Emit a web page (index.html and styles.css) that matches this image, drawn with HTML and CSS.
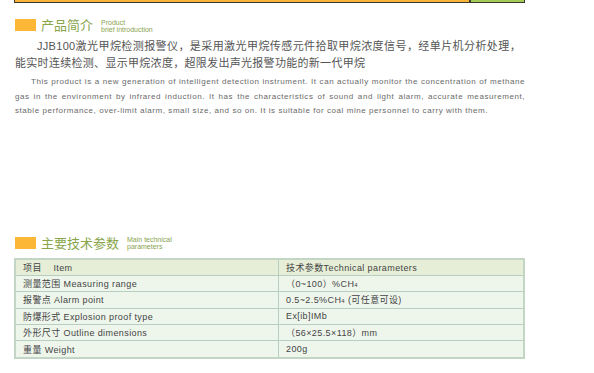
FILE: index.html
```html
<!DOCTYPE html>
<html lang="zh">
<head>
<meta charset="utf-8">
<title>JJB100</title>
<link rel="stylesheet" href="styles.css">
</head>
<body>
<div class="page">
  <div class="topbar"><div class="bar-orange"></div><div class="bar-green"></div></div>

  <div class="title title-first">
    <span class="title-block"></span>
    <h2 class="title-zh">产品简介</h2>
    <div class="title-en"><span>Product</span><span>brief introduction</span></div>
  </div>

  <p class="intro-zh">JJB100激光甲烷检测报警仪，是采用激光甲烷传感元件拾取甲烷浓度信号，经单片机分析处理，能实时连续检测、显示甲烷浓度，超限发出声光报警功能的新一代甲烷</p>
  <p class="intro-en">This product is a new generation of intelligent detection instrument. It can actually monitor the concentration of methane gas in the environment by infrared induction. It has the characteristics of sound and light alarm, accurate measurement, stable performance, over-limit alarm, small size, and so on. It is suitable for coal mine personnel to carry with them.</p>

  <div class="title title-second">
    <span class="title-block"></span>
    <h2 class="title-zh">主要技术参数</h2>
    <div class="title-en"><span>Main technical</span><span>parameters</span></div>
  </div>

  <table class="specs">
    <tr class="head"><td class="c1">项目&nbsp;&nbsp;&nbsp;&nbsp;Item</td><td>技术参数Technical parameters</td></tr>
    <tr><td class="c1">测量范围 Measuring range</td><td>（0~100）%CH<sub>4</sub></td></tr>
    <tr><td class="c1">报警点 Alarm point</td><td>0.5~2.5%CH<sub>4</sub> (可任意可设)</td></tr>
    <tr><td class="c1">防爆形式 Explosion proof type</td><td>Ex[ib]IMb</td></tr>
    <tr><td class="c1">外形尺寸 Outline dimensions</td><td>（56×25.5×118）mm</td></tr>
    <tr><td class="c1">重量 Weight</td><td>200g</td></tr>
  </table>
</div>
</body>
</html>
```
FILE: styles.css
```css
html, body {
  margin: 0;
  padding: 0;
  background: #fff;
}
body {
  font-family: "Liberation Sans", "Noto Sans CJK SC", sans-serif;
}
.page {
  margin-left: 14px;
  width: 511px;
}
.topbar {
  display: flex;
  height: 2px;
  border-left: 1px solid #3a3a2a;
  border-bottom: 1px solid #3a3a2a;
}
.bar-orange {
  flex: 1;
  background: #fbb43a;
}
.bar-green {
  width: 53px;
  background: #a2cc55;
  border-left: 2px solid #3a3a2a;
  border-right: 1px solid #3a3a2a;
}
.title {
  display: flex;
  align-items: center;
  height: 14px;
  padding-left: 1px;
}
.title-first {
  margin-top: 15px;
}
.title-second {
  margin-top: 117px;
}
.title-block {
  width: 21px;
  height: 12px;
  background: #fbb735;
}
.title-zh {
  margin: 0 0 0 5px;
  font-family: "Noto Sans CJK SC", sans-serif;
  font-weight: normal;
  font-size: 13px;
  line-height: 14px;
  color: #88a54a;
}
.title-en {
  display: flex;
  flex-direction: column;
  margin-left: 8px;
  padding-top: 1px;
  font-size: 7px;
  line-height: 7px;
  color: #8aa450;
}
.intro-zh {
  margin: 6px 4px 0 0;
  padding-left: 1px;
  font-family: "Liberation Sans", "Noto Sans CJK SC", sans-serif;
  font-size: 11px;
  line-height: 17px;
  letter-spacing: 0.3px;
  text-indent: 22px;
  text-align: justify;
  color: #555;
}
.intro-en {
  margin: 3px 0 0;
  padding-left: 1px;
  font-size: 8px;
  line-height: 14.5px;
  letter-spacing: 0.56px;
  text-indent: 16px;
  text-align: justify;
  color: #6a6a6a;
}
.specs {
  margin-top: 8px;
  width: 511px;
  border-collapse: collapse;
  border: 2px solid #c3d6c5;
  font-size: 9px;
  letter-spacing: 0.4px;
  color: #444;
}
.specs td {
  height: 15.4px;
  padding: 0 0 0 7px;
  border: 1px solid #b7cfc0;
  background: #eef6ec;
  font-family: "Liberation Sans", "Noto Sans CJK SC", sans-serif;
}
.specs .c1 {
  width: 255px;
}
.specs .head td {
  background: #e6eed8;
}
.specs sub {
  font-size: 6px;
  vertical-align: baseline;
}
```
